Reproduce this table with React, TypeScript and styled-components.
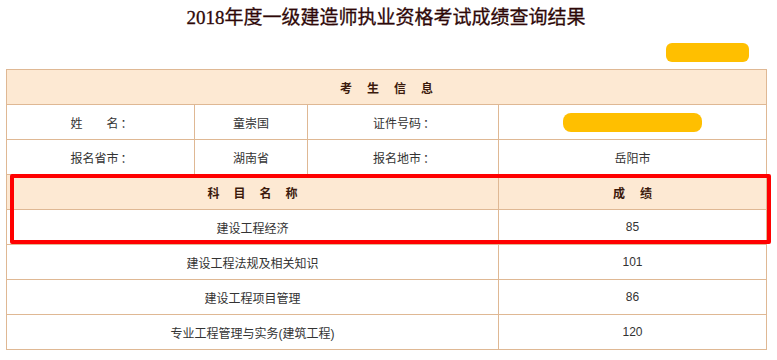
import React from "react";
import styled, { createGlobalStyle } from "styled-components";

const Global = createGlobalStyle`
  html, body { margin: 0; padding: 0; background: #ffffff; }
  body { font-family: "Liberation Sans", "Noto Sans CJK SC", sans-serif; }
`;

const Page = styled.div`
  width: 777px;
  padding-left: 6px;
  box-sizing: border-box;
`;

const Title = styled.h1`
  margin: 0;
  width: 760px;
  height: 36px;
  line-height: 36px;
  text-align: center;
  font-family: "Liberation Serif", "Noto Sans CJK SC", serif;
  font-size: 19px;
  font-weight: 400;
  color: #2e0808;
  -webkit-text-stroke: 0.3px #2e0808;
`;

const BadgeRow = styled.div`
  width: 760px;
  height: 33px;
  display: flex;
  justify-content: flex-end;
  align-items: flex-start;
  padding-top: 7px;
  padding-right: 17px;
  box-sizing: border-box;
`;

const Mask = styled.span<{ $w: number; $h: number; $r: number }>`
  display: inline-block;
  width: ${(p) => p.$w}px;
  height: ${(p) => p.$h}px;
  border-radius: ${(p) => p.$r}px;
  background: #ffbf00;
  vertical-align: middle;
`;

const TableWrap = styled.div`
  position: relative;
  width: 760px;
`;

const Table = styled.table`
  width: 760px;
  border-collapse: collapse;
  table-layout: fixed;
`;

const Cell = styled.td<{ $head?: boolean }>`
  height: 34px;
  padding: 0;
  border: 1px solid #dfb894;
  text-align: center;
  vertical-align: middle;
  font-size: 12px;
  color: ${(p) => (p.$head ? "#3b1a0c" : "#333333")};
  font-weight: ${(p) => (p.$head ? 700 : 400)};
  background: ${(p) => (p.$head ? "#fde9d3" : "#ffffff")};
`;

const Spaced = styled.span<{ $gap: number }>`
  letter-spacing: ${(p) => p.$gap}px;
  margin-right: -${(p) => p.$gap}px;
`;

const Colon = styled.span`
  display: inline-block;
  padding-left: 2px;
  margin-right: -2px;
`;

const Highlight = styled.div`
  position: absolute;
  left: 4px;
  top: 105px;
  width: 761px;
  height: 70px;
  border: 4px solid #ff0000;
  border-radius: 2px;
  box-sizing: border-box;
  pointer-events: none;
`;

const scores: [string, string][] = [
  ["建设工程经济", "85"],
  ["建设工程法规及相关知识", "101"],
  ["建设工程项目管理", "86"],
  ["专业工程管理与实务(建筑工程)", "120"],
];

const Label = ({ text }: { text: string }) => (
  <>
    {text}
    <Colon>：</Colon>
  </>
);

export default function App() {
  return (
    <Page>
      <Global />
      <Title>2018年度一级建造师执业资格考试成绩查询结果</Title>
      <BadgeRow>
        <Mask $w={83} $h={19} $r={6} />
      </BadgeRow>
      <TableWrap>
        <Table>
          <colgroup>
            <col style={{ width: 188 }} />
            <col style={{ width: 113 }} />
            <col style={{ width: 191 }} />
            <col style={{ width: 268 }} />
          </colgroup>
          <tbody>
            <tr>
              <Cell $head colSpan={4}>
                <Spaced $gap={15}>考生信息</Spaced>
              </Cell>
            </tr>
            <tr>
              <Cell>
                <Label text="姓　　名" />
              </Cell>
              <Cell>童崇国</Cell>
              <Cell>
                <Label text="证件号码" />
              </Cell>
              <Cell>
                <Mask $w={139} $h={19} $r={8} />
              </Cell>
            </tr>
            <tr>
              <Cell>
                <Label text="报名省市" />
              </Cell>
              <Cell>湖南省</Cell>
              <Cell>
                <Label text="报名地市" />
              </Cell>
              <Cell>岳阳市</Cell>
            </tr>
            <tr>
              <Cell $head colSpan={3}>
                <Spaced $gap={14}>科目名称</Spaced>
              </Cell>
              <Cell $head>
                <Spaced $gap={15}>成绩</Spaced>
              </Cell>
            </tr>
            {scores.map(([name, score]) => (
              <tr key={name}>
                <Cell colSpan={3}>{name}</Cell>
                <Cell>{score}</Cell>
              </tr>
            ))}
          </tbody>
        </Table>
        <Highlight />
      </TableWrap>
    </Page>
  );
}
